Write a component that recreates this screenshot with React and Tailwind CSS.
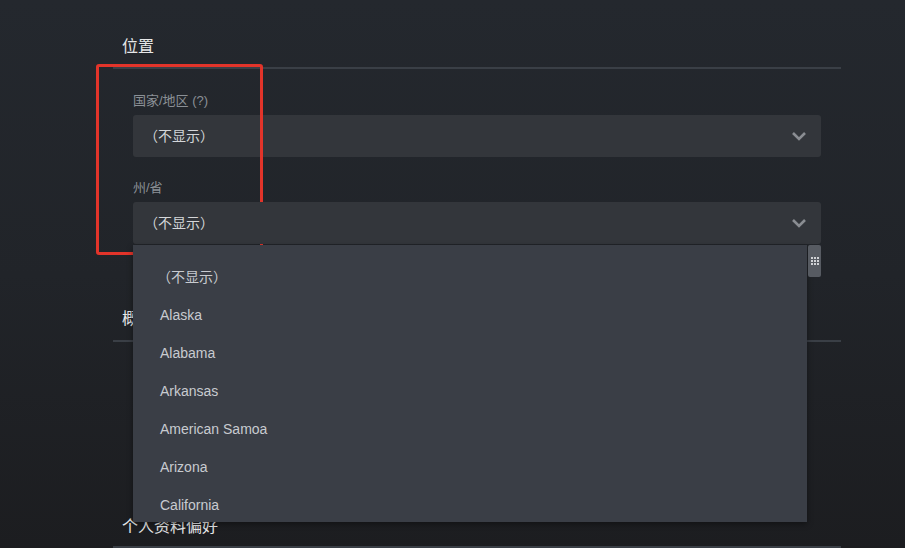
import React from "react";

const font = { fontFamily: '"Liberation Sans", "Noto Sans CJK SC", Arial, sans-serif' };

function Chevron() {
  return (
    <svg width="16" height="10" viewBox="0 0 16 10" className="shrink-0">
      <polyline points="2,2 8,8 14,2" fill="none" stroke="#8a8d92" strokeWidth="2.6" strokeLinecap="butt" strokeLinejoin="miter" />
    </svg>
  );
}

function Select({ value }) {
  return (
    <div className="h-[42px] bg-[#33363b] rounded-[3px] flex items-center justify-between pl-[11px] pr-[14px]">
      <span className="text-[14px] text-[#d4d6d9] leading-none">{value}</span>
      <Chevron />
    </div>
  );
}

const items = ["（不显示）", "Alaska", "Alabama", "Arkansas", "American Samoa", "Arizona", "California"];

export default function App() {
  return (
    <div
      style={font}
      className="relative w-[905px] h-[548px] overflow-hidden bg-gradient-to-b from-[#24282e] via-[#212429] to-[#1c1d20]"
    >
      <div className="ml-[113px] w-[728px] pt-[37px]">
        <h2 className="pl-[9px] text-[16px] leading-[20px] text-[#e6e7e8]">位置</h2>
        <div className="mt-[10px] h-[2px] bg-[#3a3f46]" />

        <div className="px-[20px]">
          <div className="mt-[24px] text-[13px] leading-[16px] text-[#8b9096]">国家/地区 (?)</div>
          <div className="mt-[6px]">
            <Select value="（不显示）" />
          </div>

          <div className="mt-[23px] text-[13px] leading-[16px] text-[#8b9096]">州/省</div>
          <div className="mt-[6px] relative z-10">
            <Select value="（不显示）" />
            <div className="absolute left-0 top-[43px] w-[674px] h-[277px] bg-[#3a3e46] overflow-hidden pt-[13px] shadow-[0_2px_6px_rgba(0,0,0,0.4)]">
              {items.map((t, i) => (
                <div
                  key={t}
                  className={`h-[38px] flex items-center text-[14px] text-[#c8cbd0] ${i === 0 ? "pl-[24px]" : "pl-[27px]"}`}
                >
                  {t}
                </div>
              ))}
            </div>
            <div className="absolute left-[675px] top-[43px] w-[13px] h-[32px] rounded-[2px] bg-[#575b62] flex items-center justify-center">
              <div className="grid grid-cols-3 gap-[1px]">
                {Array.from({ length: 9 }).map((_, i) => (
                  <div key={i} className="w-[2px] h-[2px] bg-[#d0d2d5]" />
                ))}
              </div>
            </div>
          </div>
        </div>

        <h2 className="mt-[65px] pl-[9px] text-[16px] leading-[20px] text-[#e6e7e8]">概要</h2>
        <div className="mt-[11px] h-[2px] bg-[#3a3f46]" />

        <h2 className="mt-[175px] pl-[9px] text-[16px] leading-[20px] text-[#e6e7e8]">个人资料偏好</h2>
        <div className="mt-[9px] h-[2px] bg-[#3a3f46]" />
      </div>

      <div className="pointer-events-none absolute left-[96px] top-[64px] w-[167px] h-[191px] border-[3px] border-[#e2342a] rounded-[3px]" />
    </div>
  );
}
